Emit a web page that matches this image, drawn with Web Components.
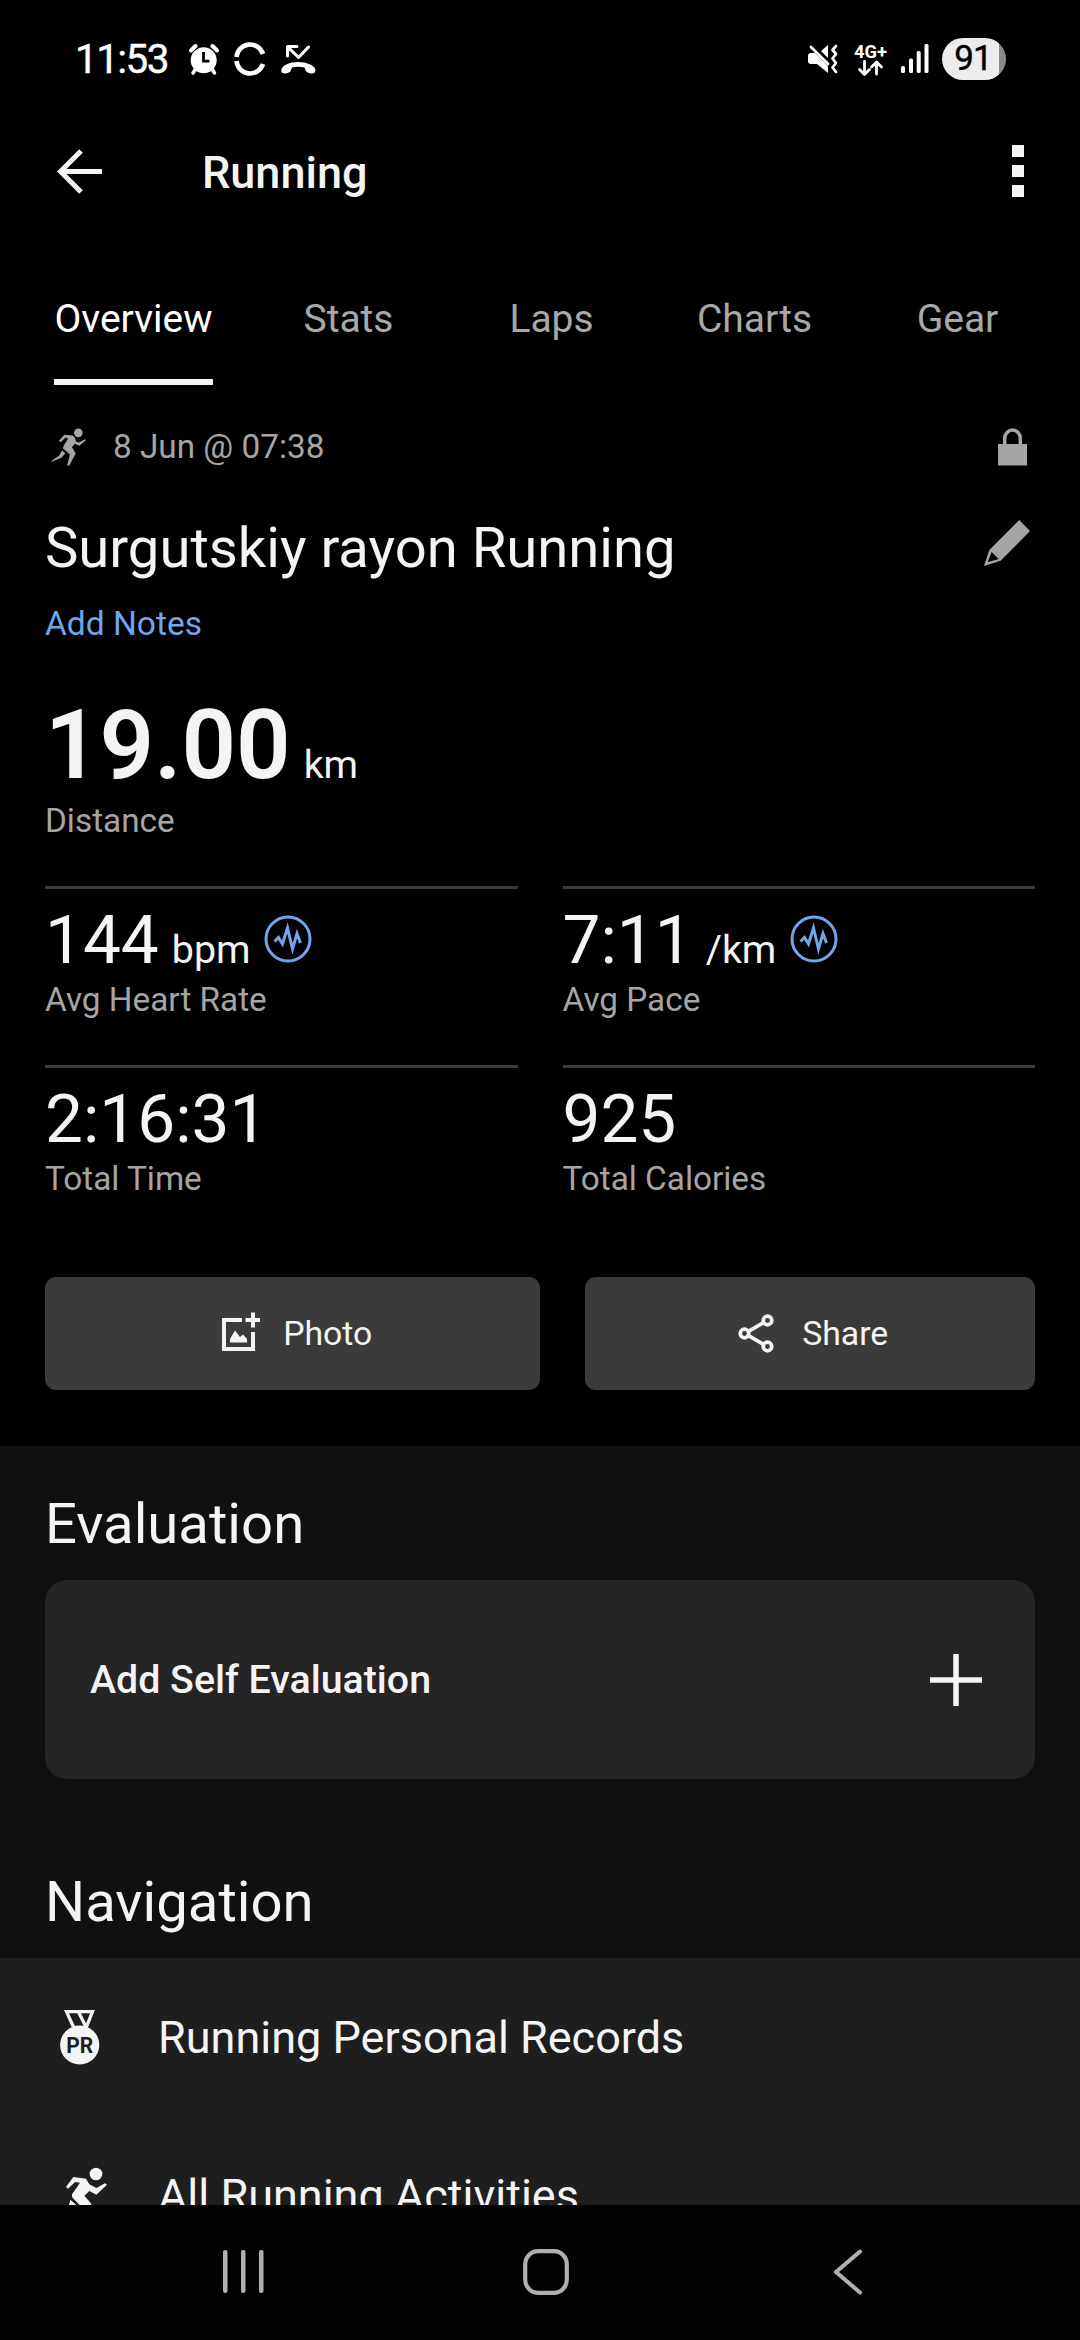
<!DOCTYPE html>
<html lang="en">
<head>
<meta charset="utf-8">
<title>Running</title>
<style>
  html, body {
    margin: 0;
    background: #000;
  }
  body {
    width: 1080px;
    height: 2340px;
    overflow: hidden;
    font-family: Roboto, sans-serif;
    color: #f4f4f4;
  }
</style>
</head>
<body>
<activity-screen>
  <status-bar slot="top" time="11:53" battery="91"></status-bar>
  <app-bar slot="top">Running</app-bar>
  <tab-bar slot="top">
    <tab-item active>Overview</tab-item>
    <tab-item>Stats</tab-item>
    <tab-item>Laps</tab-item>
    <tab-item>Charts</tab-item>
    <tab-item>Gear</tab-item>
  </tab-bar>

  <activity-header>
    <span slot="date">8 Jun @ 07:38</span>
    <span slot="title">Surgutskiy rayon Running</span>
    <span slot="notes">Add Notes</span>
  </activity-header>

  <stat-grid>
    <stat-item hero value="19.00" unit="km">Distance</stat-item>
    <stat-item value="144" unit="bpm" chart>Avg Heart Rate</stat-item>
    <stat-item value="7:11" unit="/km" chart>Avg Pace</stat-item>
    <stat-item value="2:16:31">Total Time</stat-item>
    <stat-item value="925">Total Calories</stat-item>
  </stat-grid>

  <action-row>
    <action-button icon="photo">Photo</action-button>
    <action-button icon="share">Share</action-button>
  </action-row>

  <page-section heading="Evaluation">
    <add-card>Add Self Evaluation</add-card>
  </page-section>
  <page-section heading="Navigation" class="next">
    <nav-list>
      <nav-row icon="medal">Running Personal Records</nav-row>
      <nav-row icon="runner">All Running Activities</nav-row>
    </nav-list>
  </page-section>

  <system-nav slot="bottom"></system-nav>
</activity-screen>

<script>
(function () {
  const ICONS = {
    alarm: `<svg width="30" height="42" viewBox="0 0 30 42">
      <circle cx="14.7" cy="22.3" r="13" fill="#fff"/>
      <path d="M2 12.5L6.5 8M28 12.5L23.5 8" stroke="#fff" stroke-width="4" stroke-linecap="round"/>
      <path d="M6.5 31L4 35M23 31L25.5 35" stroke="#fff" stroke-width="3.5" stroke-linecap="round"/>
      <path d="M14.5 14V23.2H20.5" fill="none" stroke="#000" stroke-width="2.8"/></svg>`,
    ring: `<svg width="32" height="42" viewBox="0 0 32 42" fill="none" stroke="#fff" stroke-width="4.6">
      <path d="M2.5 19A13.6 13.6 0 0 1 29 16"/><path d="M2.5 23A13.6 13.6 0 0 0 29 26"/></svg>`,
    missed: `<svg width="35" height="42" viewBox="0 0 35 42">
      <path d="M6.5 18V8.5H16M7 9L17.5 19.5L27.5 9" fill="none" stroke="#fff" stroke-width="3" stroke-linejoin="round" stroke-linecap="round"/>
      <path d="M17 24C25 24 34 27 34.5 32C34.6 35 32 36 29 35.3C26 34.5 25 34 24.5 32L23.5 29.5Q17 28 11 29.5L10 32C9.5 34 8.5 34.5 5.5 35.3C2.5 36 0 35 .3 32C1 27 9 24 17 24Z" fill="#fff"/></svg>`,
    mute: `<svg width="30" height="42" viewBox="0 0 30 42">
      <path d="M0 18Q0 15 3 15H7L20 28V35L9 26H3Q0 26 0 23Z" fill="#fff"/>
      <path d="M13 13L20 7V20Z" fill="#fff"/>
      <path d="M3 9L20 26" stroke="#fff" stroke-width="2.8" stroke-linecap="round"/>
      <path d="M28 8L24.5 12L28 16L24.5 20.5L28 25L24.5 29.5L28 34" fill="none" stroke="#fff" stroke-width="2.8" stroke-linecap="round" stroke-linejoin="round"/></svg>`,
    network: `<svg width="34" height="42" viewBox="0 0 34 42">
      <text x="0" y="19.5" font-family="Roboto, sans-serif" font-weight="700" font-size="18.5" textLength="33" lengthAdjust="spacingAndGlyphs" fill="#fff">4G+</text>
      <path d="M10.5 23.5V36M5.5 31.5L10.5 36.5L15.5 31.5M22.5 36V24.5M17.5 29L22.5 24L27.5 29" fill="none" stroke="#fff" stroke-width="2.8" stroke-linecap="round" stroke-linejoin="round"/></svg>`,
    signal: `<svg width="28" height="42" viewBox="0 0 28 42" fill="#fff">
      <rect x="0" y="28" width="4" height="7" rx="1.5"/><rect x="8" y="20.5" width="4" height="14.5" rx="1.5"/>
      <rect x="15.7" y="13" width="4" height="22" rx="1.5"/><rect x="23.5" y="6" width="4" height="29" rx="1.5"/></svg>`,
    back: `<svg width="45" height="45" viewBox="0 0 45 45" fill="none" stroke="#f4f4f4" stroke-width="5">
      <path d="M24 2L3.5 22.5L24 43M4 22.5H45"/></svg>`,
    more: `<svg width="12" height="52" viewBox="0 0 12 52" fill="#f4f4f4">
      <path d="M0 0H12V12H0ZM0 20H12V32H0ZM0 40H12V52H0Z"/></svg>`,
    jogger: `<svg width="35" height="38" viewBox="63 52 105 113" fill="#a5a5a5">
      <circle cx="145" cy="66" r="13"/>
      <path d="M87 90L103 72L128 74L135 81L138 92L147 95L165 85L168 88L148 105L134 99L126 109L137 128L118 164L111 164L120 131L99 113L100 106L114 84L107 80L92 94Z"/>
      <path d="M96 119L106 127L95 140L66 153L63 151L87 135Z"/></svg>`,
    lock: `<svg width="29" height="38" viewBox="0 0 29 38">
      <path d="M6.7 17V10.5A7.8 8.5 0 0 1 22.3 10.5V17" fill="none" stroke="#a5a5a5" stroke-width="3.5"/>
      <rect y="16" width="29" height="21.5" fill="#a5a5a5"/></svg>`,
    pencil: `<svg width="46" height="46" viewBox="72 329 138 138" fill="#a5a5a5" fill-rule="evenodd">
      <path d="M178 329L210 362L122 451L72 467L88 419ZM95 425L83 456L116 446Z"/></svg>`,
    pulse: `<svg width="48" height="48" viewBox="0 0 48 48" fill="none" stroke="#71a6ec" stroke-width="3">
      <circle cx="24" cy="24" r="22"/>
      <path d="M10.5 26.5L14.5 22.5L18.5 29L23.5 13L28.5 34L33 18.5L36.5 28"/></svg>`,
    photo: `<svg width="45" height="45" viewBox="-7 -1 45 45" fill="none" stroke="#f4f4f4" stroke-width="4">
      <path d="M20 8H2V37H31V20M31 .5V15.5M23.5 8H38.5"/>
      <path d="M8 30.5V27L13 18.5L18 25L21 22.5L25 27V30.5Z" fill="#f4f4f4" stroke="none"/></svg>`,
    share: `<svg width="45" height="45" viewBox="-5 -3 45 45" fill="none" stroke="#f4f4f4" stroke-width="3.7">
      <circle cx="28.5" cy="6.5" r="4.3"/><circle cx="5.5" cy="19.5" r="4.3"/><circle cx="28.5" cy="32.5" r="4.3"/>
      <path d="M9.5 17.3L24.5 8.7M9.5 21.7L24.5 30.3"/></svg>`,
    plus: `<svg width="52" height="52" viewBox="0 0 52 52" stroke="#f4f4f4" stroke-width="5.5">
      <path d="M26 0V52M0 26H52"/></svg>`,
    medal: `<svg width="40" height="55" viewBox="0 0 40 55">
      <path d="M6.5 1.6H32.5L26 18H14ZM18.5 2L26.5 18" fill="none" stroke="#f4f4f4" stroke-width="3.3"/>
      <circle cx="19.7" cy="35" r="19.6" fill="#f4f4f4"/>
      <text x="6.3" y="43" font-family="Roboto, sans-serif" font-weight="700" font-size="22" textLength="27" lengthAdjust="spacingAndGlyphs" fill="#1e1e1e">PR</text></svg>`,
    runner: `<svg width="52" height="57" viewBox="30 498 156 171" fill="#f4f4f4">
      <circle cx="138" cy="519" r="19"/>
      <path d="M48 558L70 528L108 533L118 550L139 561L165 547L171 551L139 581L118 570L103 584L124 608L112 665L100 665L104 628L66 588L66 580L90 545L75 543L54 563Z"/>
      <path d="M61 596L80 613L66 636L36 654L30 648L54 624Z"/></svg>`,
    recents: `<svg width="41" height="43" viewBox="0 0 41 43" fill="#b0b0b0">
      <rect width="4.5" height="43" rx="2"/><rect x="18" width="4.5" height="43" rx="2"/><rect x="36" width="4.5" height="43" rx="2"/></svg>`,
    home: `<svg width="46" height="46" viewBox="0 0 46 46">
      <rect x="2.2" y="2.2" width="41.6" height="41.6" rx="13" fill="none" stroke="#b0b0b0" stroke-width="4.2"/></svg>`,
    chevron: `<svg width="30" height="46" viewBox="0 0 30 46">
      <path d="M27 2.5L3 23L27 43.5" fill="none" stroke="#b0b0b0" stroke-width="4" stroke-linecap="round" stroke-linejoin="round"/></svg>`
  };

  class BaseElement extends HTMLElement {
    constructor() {
      super();
      this.attachShadow({ mode: "open" });
    }
    connectedCallback() {
      this.shadowRoot.innerHTML = `<style>svg { display: block; flex: none; } ${this.css()}</style>${this.html()}`;
    }
  }

  class ActivityScreen extends BaseElement {
    css() {
      return `
        :host { display: flex; flex-direction: column; height: 2340px; }
        main { flex: 1; min-height: 0; overflow: hidden; }`;
    }
    html() {
      return `<slot name="top"></slot><main><slot></slot></main><slot name="bottom"></slot>`;
    }
  }

  class StatusBar extends BaseElement {
    css() {
      return `
        :host { display: flex; justify-content: space-between; box-sizing: border-box;
          height: 95px; padding: 38px 74px 0 75px; color: #fff; }
        div { display: flex; height: 42px; }
        .time { font-size: 40.5px; font-weight: 400; -webkit-text-stroke: .4px #fff; line-height: 42px; letter-spacing: -1.6px; width: 114px; }
        .left svg + svg { margin-left: 15px; }
        .right svg { margin-left: 13px; }
        .right svg:first-child { margin-right: 3px; }
        .battery { justify-content: center; width: 64px; margin-left: 13.5px; border-radius: 21px;
          background: linear-gradient(90deg, #ececec 57px, #8a8a8a 57px); color: #000;
          font-size: 35px; font-weight: 400; -webkit-text-stroke: .4px #000; line-height: 42px; letter-spacing: -1px; }
        .battery span { margin-right: 2px; }`;
    }
    html() {
      return `
        <div class="left"><span class="time">${this.getAttribute("time")}</span>${ICONS.alarm}${ICONS.ring}${ICONS.missed}</div>
        <div class="right">${ICONS.mute}${ICONS.network}${ICONS.signal}
          <div class="battery"><span>${this.getAttribute("battery")}</span></div></div>`;
    }
  }

  class AppBar extends BaseElement {
    css() {
      return `
        :host { display: flex; align-items: center; height: 152px; padding: 0 56px 0 57px; }
        h1 { flex: 1; margin: 0; padding: 3px 0 0 100px; font-size: 45px; font-weight: 500; line-height: 54px; }`;
    }
    html() {
      return `${ICONS.back}<h1><slot></slot></h1>${ICONS.more}`;
    }
  }

  class TabBar extends BaseElement {
    css() {
      return `:host { display: grid; grid-template-columns: 215px repeat(4, 203px); padding-left: 31px; height: 138px; }`;
    }
    html() {
      return `<slot></slot>`;
    }
  }

  class TabItem extends BaseElement {
    css() {
      return `
        :host { display: flex; justify-content: center; width: 205px; color: #a8a8a8; font-size: 39px; }
        span { box-sizing: border-box; height: 138px; padding-top: 40px; line-height: 65px; }
        :host([active]) { color: #fff; }
        :host([active]) span { border-bottom: 6px solid #f4f4f4; }`;
    }
    html() {
      return `<span><slot></slot></span>`;
    }
  }

  class ActivityHeader extends BaseElement {
    css() {
      return `
        :host { display: block; padding: 0 45px; }
        div { display: flex; align-items: center; }
        .date { height: 123px; padding: 0 8px 0 6px; color: #a5a5a5; font-size: 33.3px; }
        .date p { flex: 1; margin: 0 0 0 27px; }
        .title { height: 80px; padding-right: 5px; justify-content: space-between; font-size: 56.2px; }
        .title svg { margin-bottom: 10px; }
        .notes { height: 71px; color: #71a6ec; font-size: 33.5px; }`;
    }
    html() {
      return `
        <div class="date">${ICONS.jogger}<p><slot name="date"></slot></p>${ICONS.lock}</div>
        <div class="title"><slot name="title"></slot>${ICONS.pencil}</div>
        <div class="notes"><slot name="notes"></slot></div>`;
    }
  }

  class StatGrid extends BaseElement {
    css() {
      return `
        :host { display: grid; grid-template-columns: 1fr 1fr; column-gap: 45px; padding: 0 45px; }
        ::slotted([hero]) { grid-column: 1 / 3; }`;
    }
    html() {
      return `<slot></slot>`;
    }
  }

  class StatItem extends BaseElement {
    css() {
      return `
        :host { display: block; border-top: 3px solid #3b3b3b; padding: 11px 0 46px; }
        .value { display: flex; align-items: baseline; height: 80px; line-height: 80px; font-size: 67.5px; }
        .unit { margin-left: 13px; font-size: 39.375px; }
        .value svg { align-self: flex-start; margin: 15px 0 0 13.5px; }
        .label { line-height: 39px; font-size: 33.3px; color: #a5a5a5; }
        :host([hero]) { border: 0; padding: 28px 0 47px; }
        :host([hero]) .value { height: 116px; line-height: 117px; }
        :host([hero]) .number { font-size: 95.6px; font-weight: 600; }
        :host([hero]) .label { line-height: 36px; }`;
    }
    html() {
      const unit = this.getAttribute("unit");
      return `
        <div class="value"><span class="number">${this.getAttribute("value")}</span>${unit ? `<span class="unit">${unit}</span>` : ""}${this.hasAttribute("chart") ? ICONS.pulse : ""}</div>
        <div class="label"><slot></slot></div>`;
    }
  }

  class ActionRow extends BaseElement {
    css() {
      return `:host { display: grid; grid-template-columns: 495px 450px; column-gap: 45px; padding: 33px 45px 56px; }`;
    }
    html() {
      return `<slot></slot>`;
    }
  }

  class ActionButton extends BaseElement {
    css() {
      return `
        :host { display: flex; align-items: center; justify-content: center; gap: 23.5px; height: 113px;
          border-radius: 11px; background: #3b3b3b; font-size: 33.75px; }
        svg { margin-left: 2px; }`;
    }
    html() {
      return `${ICONS[this.getAttribute("icon")]}<slot></slot>`;
    }
  }

  class PageSection extends BaseElement {
    css() {
      return `
        :host { display: block; background: #101010; }
        h2 { margin: 0; padding: 45px 45px 23px; font-size: 56.25px; font-weight: 400; line-height: 66px; }
        :host(.next) h2 { padding-top: 90px; }`;
    }
    html() {
      return `<h2>${this.getAttribute("heading")}</h2><slot></slot>`;
    }
  }

  class AddCard extends BaseElement {
    css() {
      return `
        :host { display: flex; align-items: center; justify-content: space-between; height: 199px;
          margin: 0 45px; padding: 0 53px 0 45px; border-radius: 22px; background: #252525;
          font-size: 39.3px; font-weight: 500; }`;
    }
    html() {
      return `<span><slot></slot></span>${ICONS.plus}`;
    }
  }

  class NavList extends BaseElement {
    css() {
      return `:host { display: block; height: 315px; padding-top: 1px; background: #1e1e1e; }`;
    }
    html() {
      return `<slot></slot>`;
    }
  }

  class NavRow extends BaseElement {
    css() {
      return `
        :host { display: flex; align-items: center; height: 157.5px; font-size: 45px; }
        .icon { display: flex; box-sizing: border-box; justify-content: center; width: 158px; padding-left: 2px; }
        :host([icon="runner"]) .icon { padding-left: 14px; }`;
    }
    html() {
      return `<div class="icon">${ICONS[this.getAttribute("icon")]}</div><slot></slot>`;
    }
  }

  class SystemNav extends BaseElement {
    css() {
      return `
        :host { display: grid; grid-template-columns: repeat(3, 302.5px); place-items: center; height: 133px;
          padding: 0 80px 2px 92px; background: #020202; }`;
    }
    html() {
      return ICONS.recents + ICONS.home + ICONS.chevron;
    }
  }

  customElements.define("activity-screen", ActivityScreen);
  customElements.define("status-bar", StatusBar);
  customElements.define("app-bar", AppBar);
  customElements.define("tab-bar", TabBar);
  customElements.define("tab-item", TabItem);
  customElements.define("activity-header", ActivityHeader);
  customElements.define("stat-grid", StatGrid);
  customElements.define("stat-item", StatItem);
  customElements.define("action-row", ActionRow);
  customElements.define("action-button", ActionButton);
  customElements.define("page-section", PageSection);
  customElements.define("add-card", AddCard);
  customElements.define("nav-list", NavList);
  customElements.define("nav-row", NavRow);
  customElements.define("system-nav", SystemNav);
})();
</script>
</body>
</html>
